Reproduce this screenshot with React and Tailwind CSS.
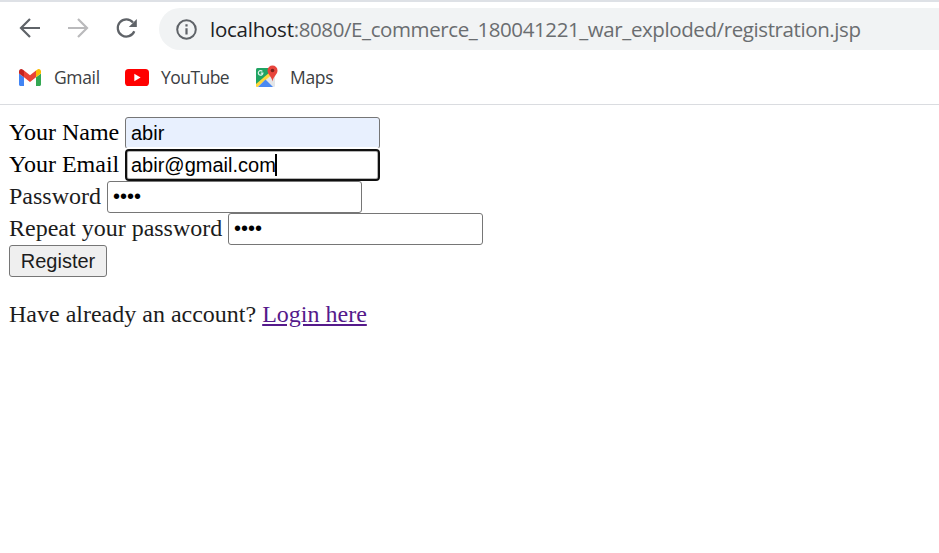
const urlFont = "font-['Open_Sans','Noto_Sans',sans-serif]";
const fieldBase =
  "box-border h-8 w-[255px] shrink-0 font-['Liberation_Sans',Arial,sans-serif] text-[20px] leading-[28px] text-black outline-none";
const field = `${fieldBase} rounded-[3px] border border-[#767676] bg-white px-[5px]`;

function GmailIcon() {
  return (
    <svg width="22" height="17" viewBox="52 42 88 66" preserveAspectRatio="none">
      <path fill="#4285f4" d="M58 108h14V74L52 59v43c0 3.320 2.690 6 6 6" />
      <path fill="#34a853" d="M120 108h14c3.320 0 6-2.690 6-6V59l-20 15" />
      <path fill="#fbbc04" d="M120 48v26l20-15v-8c0-7.420-8.470-11.650-14.400-7.200" />
      <path fill="#ea4335" d="M72 74V48l24 18 24-18v26L96 92" />
      <path fill="#c5221f" d="M52 51v8l20 15V48l-5.600-4.200c-5.940-4.450-14.400-.22-14.400 7.200" />
    </svg>
  );
}

function YouTubeIcon() {
  return (
    <svg width="24" height="17" viewBox="0 0 24 17">
      <rect width="24" height="17" rx="3.600" fill="#f00" />
      <path d="M9.300 4.800v7.400l6.300-3.700z" fill="#fff" />
    </svg>
  );
}

function MapsIcon() {
  return (
    <svg width="23" height="23" viewBox="0 0 23 23">
      <rect x="1" y="3" width="19" height="19" rx="1.500" fill="#e4e6e8" />
      <path d="M2.500 3H14v8L1 21V4.500Q1 3 2.500 3z" fill="#1fa463" />
      <path d="M1 19 14.500 7.500l2 2.500L2.500 22H2q-1 0-1-1z" fill="#ffd83b" />
      <path d="m10.500 14.500 7.500 7.500H3z" fill="#4a89f3" />
      <path d="M7.400 6.400A2.300 2.300 0 1 0 7.900 8.200H5.800" fill="none" stroke="#dff3e8" strokeWidth="1.200" />
      <path d="M17.500.5a5 5 0 0 0-5 5c0 4 4 5.500 5 11 1-5.500 5-7 5-11a5 5 0 0 0-5-5z" fill="#e8453c" />
      <circle cx="17.500" cy="5.500" r="1.800" fill="#7d211b" />
    </svg>
  );
}

function Toolbar() {
  return (
    <div className="flex h-[50px] items-start pl-[18px] pt-[6px]">
      <svg className="mt-[7px] shrink-0" width="24" height="24" viewBox="0 0 24 24" fill="none" stroke="#5f6368" strokeWidth="2.200">
        <path d="M22 13H3.500M12 4l-9 9 9 9" />
      </svg>
      <svg className="ml-6 mt-[7px] shrink-0" width="24" height="24" viewBox="0 0 24 24" fill="none" stroke="#bababc" strokeWidth="2.200">
        <path d="M2 13h18.500M12 4l9 9-9 9" />
      </svg>
      <svg className="ml-6 mt-[7px] shrink-0" width="24" height="24" viewBox="0 0 24 24" fill="none">
        <path d="M19 7.500A8.600 8.600 0 1 0 20.300 16.300" stroke="#5f6368" strokeWidth="2.200" />
        <path d="M22.800 4v8h-8z" fill="#5f6368" />
      </svg>
      <div className="ml-[21px] flex h-[42px] flex-1 items-center rounded-l-full bg-[#f1f3f4] pl-[17px]">
        <svg className="shrink-0" width="21" height="21" viewBox="0 0 21 21">
          <circle cx="10.500" cy="10.500" r="9.300" fill="none" stroke="#5f6368" strokeWidth="2" />
          <path d="M9.400 5.300h2.200v2.200H9.400zM9.400 9.200h2.200v6.300H9.400z" fill="#5f6368" />
        </svg>
        <span className={`${urlFont} ml-[13px] whitespace-nowrap text-[20.5px] leading-[42px] tracking-[-0.4px] text-[#6a6d70]`}>
          <span className="tracking-[-0.24px] text-[#202124]">localhost</span>:8080/E_commerce_180041221_war_exploded/registration.jsp
        </span>
      </div>
    </div>
  );
}

function Bookmarks() {
  return (
    <div className={`${urlFont} flex h-[53px] items-center border-b border-[#dadce0] pb-[3px] pl-[19px] text-[17.5px] leading-[24px] text-[#3c4043]`}>
      <span className="pt-[2px]"><GmailIcon /></span>
      <span className="ml-[13px] w-[46px] whitespace-nowrap tracking-[-0.35px]">Gmail</span>
      <span className="ml-[25px] pt-px"><YouTubeIcon /></span>
      <span className="ml-[12px] w-[69px] whitespace-nowrap tracking-[-0.55px]">YouTube</span>
      <span className="ml-[25px]"><MapsIcon /></span>
      <span className="ml-[12px] whitespace-nowrap tracking-[-0.3px]">Maps</span>
    </div>
  );
}

export default function App() {
  return (
    <div className="h-[553px] w-[939px] overflow-hidden bg-white">
      <div className="h-[2px] bg-[#dee1e6]" />
      <Toolbar />
      <Bookmarks />
      <main className="pl-[9px] pt-[12px] font-['Liberation_Serif','Times_New_Roman',serif] text-[24px] leading-[30px] text-black">
        <div className="flex h-8">
          <label className="w-[116px] whitespace-nowrap">Your Name</label>
          <input className={`${field} !bg-[#e8f0fe]`} defaultValue="abir" />
        </div>
        <div className="flex h-8">
          <label className="w-[116px] whitespace-nowrap">Your Email</label>
          <div className={`${fieldBase} relative flex items-center rounded-[4px] border-2 border-[#101010] bg-white px-[4px] shadow-[0_-2px_0_#fff,inset_0_0_0_1px_#b5b5b5]`}>
            <span>abir@gmail.com</span>
            <span className="-ml-px h-[22px] w-[2px] bg-black" />
          </div>
        </div>
        <div className="flex h-8 text-[#1c1c1c]">
          <label className="w-[98px] whitespace-nowrap">Password</label>
          <input type="password" className={`${field} pb-[2px]`} defaultValue="abir" />
        </div>
        <div className="flex h-8 text-[#1c1c1c]">
          <label className="w-[219px] whitespace-nowrap">Repeat your password</label>
          <input type="password" className={`${field} pb-[2px]`} defaultValue="abir" />
        </div>
        <button className="block h-8 w-[98px] rounded-[3px] border border-[#767676] bg-[#efefef] font-['Liberation_Sans',Arial,sans-serif] text-[20px] leading-[30px] text-[#1c1c1c]">
          Register
        </button>
        <p className="mt-[22px] text-[#1c1c1c]">
          Have already an account? <a className="text-[#551a8b] underline">Login here</a>
        </p>
      </main>
    </div>
  );
}
